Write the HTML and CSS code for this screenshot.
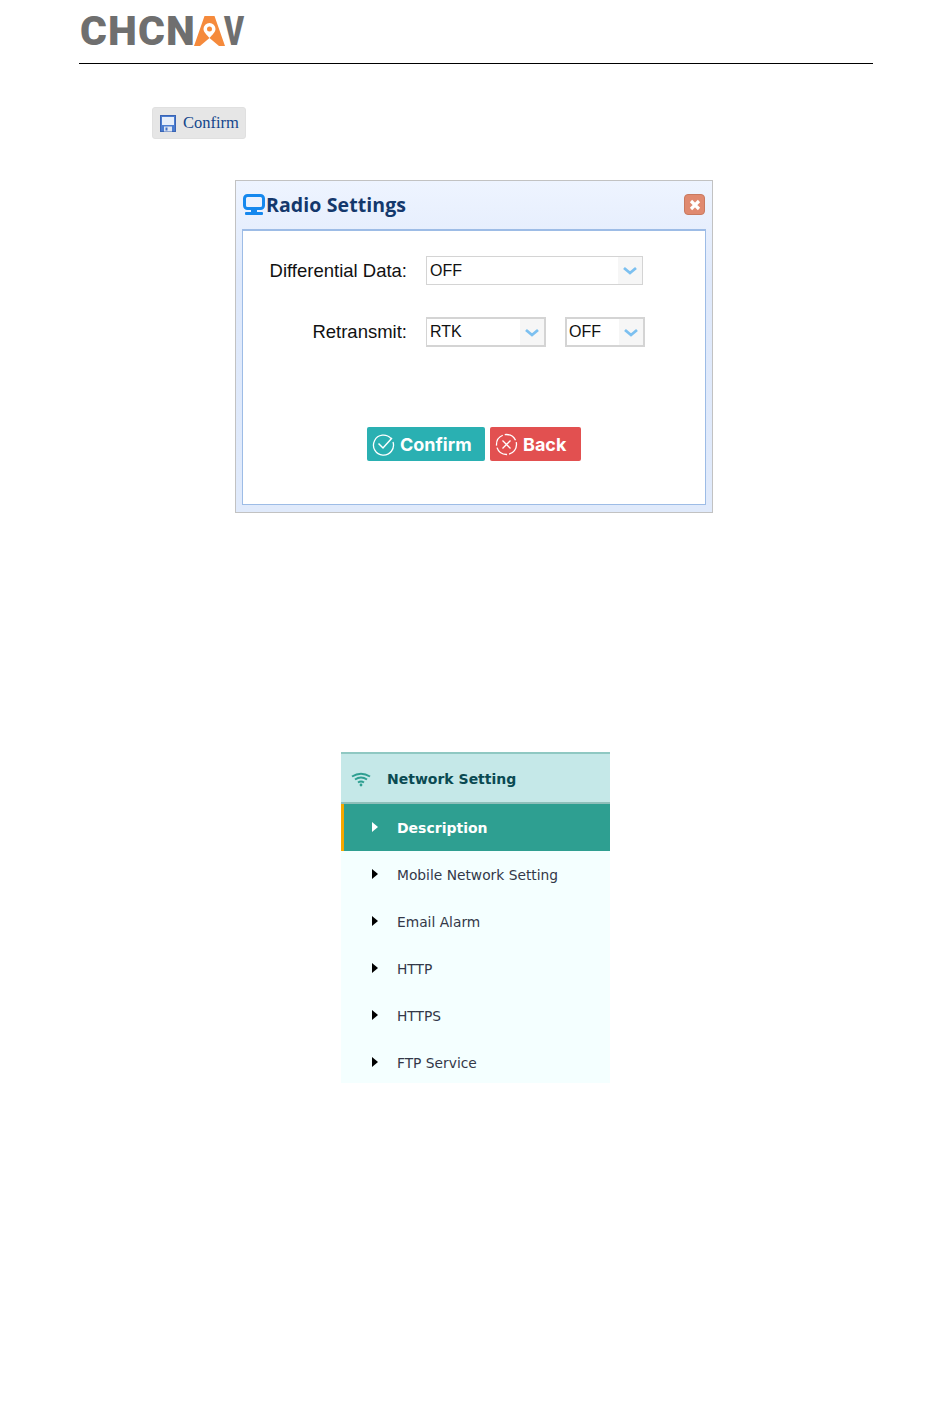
FILE: index.html
```html
<!DOCTYPE html>
<html lang="en">
<head>
<meta charset="utf-8">
<title>Radio Settings</title>
<link rel="stylesheet" href="styles.css">
</head>
<body>
<header class="doc-head">
  <div class="logo">
    <span class="logo-text">CHCN</span>
    <svg class="logo-a" width="31" height="30" viewBox="0 0 31 30" aria-hidden="true">
      <path fill="#f58a3c" d="M10.500 0H20.500L31 30H25L15.500 22L6 30H0Z"/>
      <path fill="#fff" fill-rule="evenodd" d="M15.500 7a6 6 0 0 1 6 6c0 3-3 5.500-6 9c-3-3.500-6-6-6-9a6 6 0 0 1 6-6ZM15.500 10.500a2.500 2.500 0 1 0 0 5a2.500 2.500 0 0 0 0-5Z"/>
    </svg>
    <span class="logo-text logo-v">V</span>
  </div>
</header>

<div class="toolbar">
  <button class="save-btn" type="button">
    <svg width="16" height="17" viewBox="0 0 16 17" aria-hidden="true">
      <rect x="0.500" y="0.500" width="15" height="16" fill="#4a7cd0" stroke="#3a64b4"/>
      <rect x="2" y="2" width="12" height="8" fill="#e6eefa"/>
      <rect x="4" y="11.500" width="8" height="5" fill="#dfe6f2"/>
      <rect x="5.500" y="12.500" width="2" height="3" fill="#3f70c8"/>
    </svg>
    <span>Confirm</span>
  </button>
</div>

<section class="dialog">
  <div class="dialog-title">
    <svg width="22" height="22" viewBox="0 0 22 22" aria-hidden="true">
      <rect x="1.500" y="1.500" width="19" height="13" rx="3" fill="none" stroke="#1588ee" stroke-width="3"/>
      <rect x="8" y="15" width="6" height="3" fill="#1588ee"/>
      <rect x="2" y="18" width="18" height="3" rx="1" fill="#1588ee"/>
    </svg>
    <h2>Radio Settings</h2>
    <span class="close" aria-label="Close">
      <svg width="14" height="14" viewBox="0 0 14 14" aria-hidden="true">
        <path d="M3 3L11 11M11 3L3 11" stroke="#fff" stroke-width="3.200"/>
      </svg>
    </span>
  </div>
  <div class="dialog-body">
    <div class="form-row row-first">
      <label class="form-label">Differential Data:</label>
      <div class="select select-wide">
        <span class="select-value">OFF</span>
        <span class="select-arrow"><svg width="16" height="9" viewBox="0 0 16 9" aria-hidden="true"><path d="M2 2L8 7L14 2" fill="none" stroke="#7cc0f0" stroke-width="2.800"/></svg></span>
      </div>
    </div>
    <div class="form-row row-second">
      <label class="form-label">Retransmit:</label>
      <div class="select select-mid">
        <span class="select-value">RTK</span>
        <span class="select-arrow"><svg width="16" height="9" viewBox="0 0 16 9" aria-hidden="true"><path d="M2 2L8 7L14 2" fill="none" stroke="#7cc0f0" stroke-width="2.800"/></svg></span>
      </div>
      <div class="select select-small">
        <span class="select-value">OFF</span>
        <span class="select-arrow"><svg width="16" height="9" viewBox="0 0 16 9" aria-hidden="true"><path d="M2 2L8 7L14 2" fill="none" stroke="#7cc0f0" stroke-width="2.800"/></svg></span>
      </div>
    </div>
    <div class="actions">
      <button class="action action-ok" type="button">
        <svg width="23" height="23" viewBox="0 0 23 23" aria-hidden="true">
          <path d="M19 5.500A10 10 0 1 0 21 9" fill="none" stroke="#fff" stroke-width="1.300"/>
          <path d="M6.500 10.500L11 15L20 5" fill="none" stroke="#fff" stroke-width="1.500"/>
        </svg>
        <span>Confirm</span>
      </button>
      <button class="action action-back" type="button">
        <svg width="23" height="23" viewBox="0 0 23 23" aria-hidden="true">
          <circle cx="11.500" cy="11.500" r="10" fill="none" stroke="#fff" stroke-width="1.300" stroke-dasharray="13 2"/>
          <path d="M7.500 7.500L15.500 15.500M15.500 7.500L7.500 15.500" stroke="#fff" stroke-width="1.300"/>
        </svg>
        <span>Back</span>
      </button>
    </div>
  </div>
</section>

<nav class="menu">
  <div class="menu-head">
    <svg width="20" height="15" viewBox="0 0 20 15" aria-hidden="true">
      <path d="M1 4.500Q10 -1 19 4.500M4 7.500Q10 3.500 16 7.500M7 10.500Q10 8.500 13 10.500" fill="none" stroke="#2e9f91" stroke-width="2"/>
      <circle cx="10" cy="13" r="1.400" fill="#2e9f91"/>
    </svg>
    <span>Network Setting</span>
  </div>
  <a class="menu-item is-active"><i class="tri"></i><span>Description</span></a>
  <a class="menu-item"><i class="tri"></i><span>Mobile Network Setting</span></a>
  <a class="menu-item"><i class="tri"></i><span>Email Alarm</span></a>
  <a class="menu-item"><i class="tri"></i><span>HTTP</span></a>
  <a class="menu-item"><i class="tri"></i><span>HTTPS</span></a>
  <a class="menu-item"><i class="tri"></i><span>FTP Service</span></a>
</nav>
</body>
</html>
```
FILE: styles.css
```css
* { box-sizing: border-box; }
html, body { margin: 0; padding: 0; background: #fff; }
body { width: 950px; height: 1419px; overflow: hidden; font-family: "Liberation Sans", Arial, sans-serif; color: #000; }

.doc-head { margin-left: 79px; width: 794px; height: 64px; border-bottom: 1px solid #000; padding-top: 16px; }
.logo { display: flex; align-items: flex-start; height: 30px; padding-left: 1px; }
.logo-text { font-family: Roboto, sans-serif; font-weight: 900; font-size: 41px; line-height: 30px; color: #6f6f6f; letter-spacing: 1.100px; }
.logo-a { margin-left: -2px; flex: none; }
.logo-v { margin-left: -1px; letter-spacing: 0; transform: scaleX(0.74); transform-origin: left center; }

.toolbar { margin: 43px 0 0 152px; height: 32px; }
.save-btn { display: flex; align-items: center; gap: 7px; width: 94px; height: 32px; padding: 0 0 0 7px; border: 1px solid #e0e0e0; border-radius: 3px; background: #e6e6e6; font-family: "Liberation Serif", serif; font-size: 16.500px; color: #14468c; }
.save-btn svg { flex: none; }

.dialog { margin: 41px 0 0 235px; width: 478px; height: 333px; padding: 0 6px 7px 6px; border: 1px solid #c2c2c2; background: linear-gradient(#eef4ff, #dfe9fb 30%, #e0eafb); display: flex; flex-direction: column; }
.dialog-title { display: flex; align-items: center; height: 48px; flex: none; padding-bottom: 1px; padding-left: 1px; }
.dialog-title svg { flex: none; }
.dialog-title h2 { margin: 0 0 0 1px; font-size: 19.500px; font-weight: 700; font-family: "Open Sans", sans-serif; color: #14386c; letter-spacing: 0.1px; line-height: 24px; }
.close { margin-left: auto; margin-right: 1px; width: 21px; height: 21px; border-radius: 4px; background: #e08a70; border: 1px solid #c87a60; display: flex; align-items: center; justify-content: center; }

.dialog-body { flex: 1; background: #fff; border: 1px solid #9dbce6; border-top-width: 2px; }
.form-row { display: flex; align-items: center; }
.row-first { margin-top: 25px; }
.row-second { margin-top: 32px; }
.form-label { width: 164px; text-align: right; font-size: 18.500px; line-height: 20px; color: #111; flex: none; }
.select { display: flex; align-items: stretch; border: 1px solid #d4d4d4; background: #fff; height: 29px; flex: none; margin-left: 19px; }
.select-wide { width: 217px; }
.select-mid { width: 120px; height: 30px; border-width: 2px 2px 2px 1px; }
.select-small { width: 80px; height: 30px; border-width: 2px; }
.select-value { flex: 1; padding-left: 3px; font-size: 16px; line-height: 27px; color: #111; }
.select-mid .select-value { line-height: 25px; }
.select-small .select-value { line-height: 25px; padding-left: 2px; }
.select-arrow { width: 24px; background: #f6f6f6; display: flex; align-items: center; justify-content: center; flex: none; }

.actions { display: flex; gap: 5px; margin: 80px 0 0 124px; }
.action { display: flex; align-items: center; gap: 5px; height: 34px; padding: 0 0 0 5px; border: 0; border-radius: 2px; font-family: "Inter", sans-serif; font-weight: 700; font-size: 18px; color: #fff; }
.action svg { flex: none; }
.action-ok { width: 118px; background: #2ab0b2; }
.action-back { width: 91px; background: #e25050; }

.menu { margin: 239px 0 0 341px; width: 269px; height: 331px; overflow: hidden; background: #f4ffff; display: flex; flex-direction: column; }
.menu-head { display: flex; align-items: center; height: 52px; flex: none; background: #c5e8e8; border-top: 2px solid #8fc8c2; border-bottom: 2px solid #8fbfba; padding: 2px 0 0 10px; gap: 16px; font-family: "DejaVu Sans", sans-serif; font-weight: 700; font-size: 14px; color: #0a4a52; }
.menu-item { display: flex; align-items: center; height: 47px; flex: none; padding: 0 0 0 31px; gap: 19px; font-family: "DejaVu Sans", sans-serif; font-size: 13.800px; color: #333848; }
.menu-item.is-active { background: #2e9f91; border-left: 3px solid #f5a800; padding-left: 28px; color: #fff; font-weight: 700; font-size: 14px; }
.tri { width: 0; height: 0; flex: none; border-left: 6px solid #000; border-top: 5px solid transparent; border-bottom: 5px solid transparent; margin-top: -2px; }
.is-active .tri { border-left-color: #fff; }
```
